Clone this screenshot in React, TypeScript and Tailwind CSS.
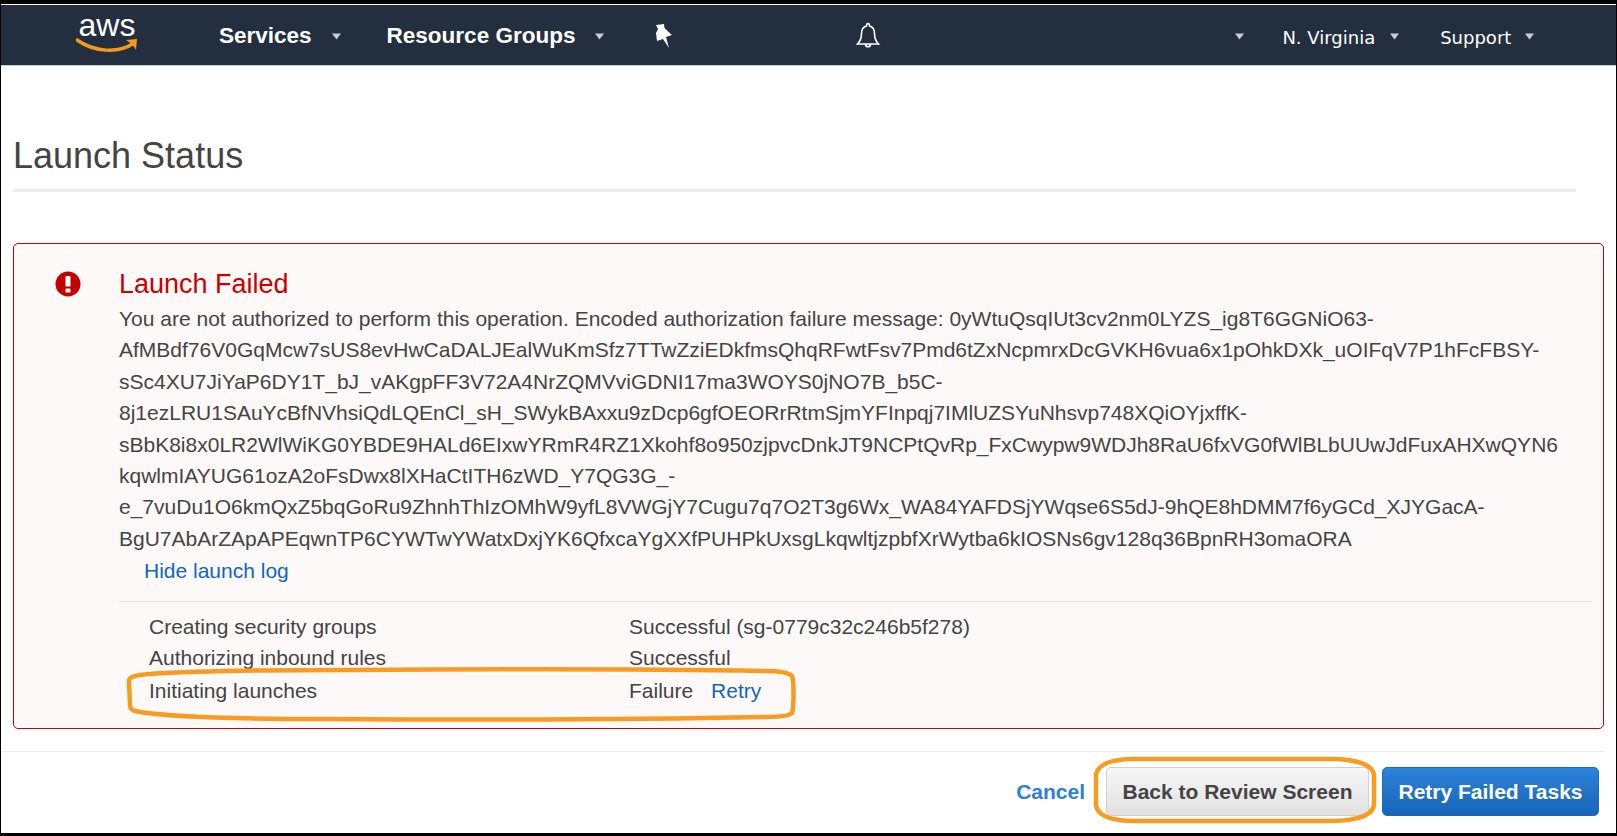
import { ReactNode } from "react";

const messageLines = [
  "You are not authorized to perform this operation. Encoded authorization failure message: 0yWtuQsqIUt3cv2nm0LYZS_ig8T6GGNiO63-",
  "AfMBdf76V0GqMcw7sUS8evHwCaDALJEalWuKmSfz7TTwZziEDkfmsQhqRFwtFsv7Pmd6tZxNcpmrxDcGVKH6vua6x1pOhkDXk_uOIFqV7P1hFcFBSY-",
  "sSc4XU7JiYaP6DY1T_bJ_vAKgpFF3V72A4NrZQMVviGDNI17ma3WOYS0jNO7B_b5C-",
  "8j1ezLRU1SAuYcBfNVhsiQdLQEnCl_sH_SWykBAxxu9zDcp6gfOEORrRtmSjmYFInpqj7IMlUZSYuNhsvp748XQiOYjxffK-",
  "sBbK8i8x0LR2WlWiKG0YBDE9HALd6EIxwYRmR4RZ1Xkohf8o950zjpvcDnkJT9NCPtQvRp_FxCwypw9WDJh8RaU6fxVG0fWlBLbUUwJdFuxAHXwQYN6",
  "kqwlmIAYUG61ozA2oFsDwx8lXHaCtITH6zWD_Y7QG3G_-",
  "e_7vuDu1O6kmQxZ5bqGoRu9ZhnhThIzOMhW9yfL8VWGjY7Cugu7q7O2T3g6Wx_WA84YAFDSjYWqse6S5dJ-9hQE8hDMM7f6yGCd_XJYGacA-",
  "BgU7AbArZApAPEqwnTP6CYWTwYWatxDxjYK6QfxcaYgXXfPUHPkUxsgLkqwltjzpbfXrWytba6kIOSNs6gv128q36BpnRH3omaORA",
];

function Caret({ className = "" }: { className?: string }) {
  return (
    <svg width="11" height="7" viewBox="0 0 11 7" className={className}>
      <path d="M1 0.5h9L5.5 6.5z" fill="#c9cdd2" />
    </svg>
  );
}

function NavItem({ children, className }: { children: ReactNode; className: string }) {
  return <span className={`whitespace-nowrap text-white ${className}`}>{children}</span>;
}

function LogRow({ label, children, className = "" }: { label: string; children: ReactNode; className?: string }) {
  return (
    <div className={`flex h-[31px] items-center text-[21px] text-[#444] ${className}`}>
      <div className="w-[480px] whitespace-nowrap">{label}</div>
      <div className="whitespace-nowrap">{children}</div>
    </div>
  );
}

export default function App() {
  return (
    <div className="relative h-[836px] w-[1617px] overflow-hidden border-x border-t-[4px] border-b-[3px] border-black bg-white pt-px font-['Liberation_Sans',Arial,sans-serif]">
      {/* Top nav */}
      <header className="flex h-[61px] items-center border-b border-[#c5cbd0] bg-[#232f3e]">
        <div className="ml-[75px] flex w-[62px] flex-col items-center">
          <span className="-mt-[7px] text-[32px] leading-[30px] text-white">aws</span>
          <svg width="62" height="16" viewBox="0 0 62 16" className="-mt-[2px]">
            <path d="M1 2c17 12 41 14 57 3" fill="none" stroke="#f79a1c" strokeWidth="3.500" strokeLinecap="round" />
            <path d="M50 2l11-1-1 11c-2-4-5-7-10-10z" fill="#f79a1c" />
          </svg>
        </div>
        <NavItem className="ml-[81px] mt-[2px] text-[22.5px] font-bold">Services</NavItem>
        <Caret className="ml-[19px] mt-[3px]" />
        <NavItem className="ml-[45px] mt-[2px] text-[22.5px] font-bold">Resource Groups</NavItem>
        <Caret className="ml-[19px] mt-[3px]" />
        <svg width="20" height="24" viewBox="0 0 20 24" className="ml-[48px] mt-[1px]">
          <path d="M3 1l8-1 .5 4 7.500 7-6 2 3 11-6-9-6 2-1-8 2-4z" fill="#fff" />
        </svg>
        <svg width="26" height="28" viewBox="0 0 26 28" className="ml-[182px] mt-[2px]">
          <path
            d="M13 1.500c1.200 0 1.500 1 1.500 2.500 3.500 1 5 3.500 5 7.500 0 5 1.500 8 4 10.500H2.500c2.500-2.500 4-5.500 4-10.500 0-4 1.500-6.500 5-7.500 0-1.500.300-2.500 1.500-2.500zM10.500 22.500c.5 3 4.500 3 5 0"
            fill="none"
            stroke="#fff"
            strokeWidth="1.600"
          />
        </svg>
        <Caret className="ml-[353px] mt-[2px]" />
        <NavItem className="ml-[37px] mt-[5px] font-['DejaVu_Sans',sans-serif] text-[18px]">N. Virginia</NavItem>
        <Caret className="ml-[14px] mt-[2px]" />
        <NavItem className="ml-[40px] mt-[5px] font-['DejaVu_Sans',sans-serif] text-[18px]">Support</NavItem>
        <Caret className="ml-[13px] mt-[2px]" />
      </header>

      {/* Page title */}
      <div className="ml-3 mr-[40px] mt-[66px] border-b-[3px] border-[#ebebeb] pb-[10px]">
        <h1 className="text-[36px] leading-[47px] font-normal text-[#444]">Launch Status</h1>
      </div>

      {/* Failure panel */}
      <section className="mx-3 mt-[51px] flex h-[486px] rounded-[5px] border border-[#c00] bg-[#fdf9f9]">
        <div className="flex w-[105px] justify-end pr-[38px] pt-[27px]">
          <svg width="26" height="26" viewBox="0 0 26 26">
            <circle cx="13" cy="13" r="12.500" fill="#c40000" />
            <rect x="10.500" y="5" width="5" height="10.500" rx="1" fill="#fff" />
            <rect x="10.500" y="17.500" width="5" height="4" rx="1" fill="#fff" />
          </svg>
        </div>
        <div className="min-w-0 flex-1 pr-[11px]">
          <div className="mt-[21px] text-[27px] leading-[38px] text-[#c00]">Launch Failed</div>
          <div className="text-[21px] leading-[31.4px] text-[#444]">
            {messageLines.map((line) => (
              <div key={line} className="whitespace-nowrap">
                {line}
              </div>
            ))}
          </div>
          <div className="mt-[1px] pl-[25px] text-[21px] leading-[32px] text-[#1166bb]">Hide launch log</div>
          <div className="mt-[14px] border-t border-[#e6e6e6] pl-[30px] pt-[9px]">
            <LogRow label="Creating security groups">Successful (sg-0779c32c246b5f278)</LogRow>
            <LogRow label="Authorizing inbound rules">Successful</LogRow>
            <LogRow label="Initiating launches" className="mt-[2px]">
              Failure <span className="ml-[12px] text-[#1166bb]">Retry</span>
            </LogRow>
          </div>
        </div>
      </section>

      {/* Footer actions */}
      <footer className="mr-[12px] mt-[22px] border-t border-[#ececec] pr-[5px] pt-[15px]">
        <div className="flex items-center justify-end">
          <span className="mr-[21px] text-[21px] font-bold text-[#2f7fd6]">Cancel</span>
          <button className="mr-[13px] h-[49px] w-[263px] rounded-[5px] border border-[#cfcfcf] bg-linear-to-b from-[#f6f6f6] to-[#e2e2e2] text-[21px] font-bold text-[#444]">
            Back to Review Screen
          </button>
          <button className="h-[49px] w-[217px] rounded-[5px] border border-[#1a6bbd] bg-linear-to-b from-[#2f82da] to-[#1566b7] text-[21px] font-bold text-white">
            Retry Failed Tasks
          </button>
        </div>
      </footer>

      {/* Hand-drawn annotations */}
      <svg className="pointer-events-none absolute -left-px -top-[4px]" width="1617" height="836" fill="none" stroke="#f89b1e" strokeWidth="4.500">
        <path d="M150 674c60-4 130-4 200-4 150-1 300-1 415 1 14 0 24 2 27 5 2 4 2 32 0 37-3 3-14 4-27 4-150 3-300 3-440 2-80 0-160-2-190-8-4-1-5-3-5-6l-1-24c0-4 6-6 21-7z" />
        <path d="M1130 759h205c25 1 38 7 39 16v30c-1 9-14 15-39 16h-205c-22-1-33-7-34-16v-30c1-9 12-15 34-16z" />
      </svg>
    </div>
  );
}
